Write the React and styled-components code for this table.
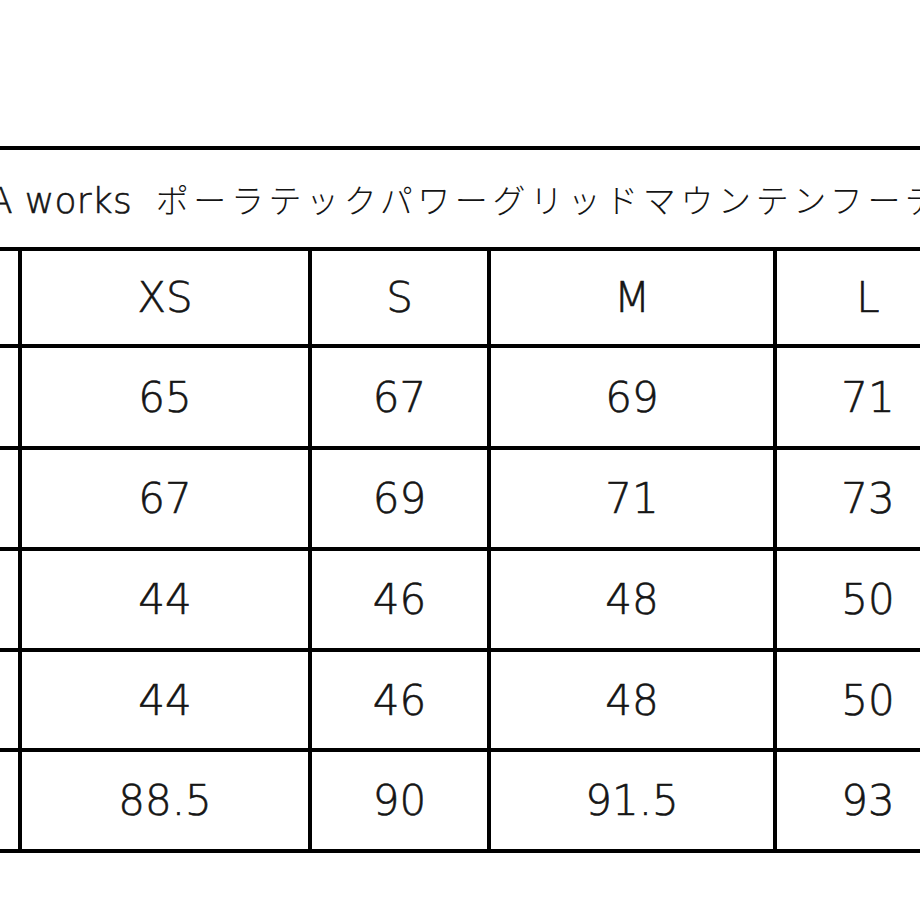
import styled, { createGlobalStyle } from "styled-components";

const GlobalStyle = createGlobalStyle`
  html, body {
    margin: 0;
    padding: 0;
    background: #fff;
  }
`;

const Viewport = styled.div`
  width: 920px;
  height: 920px;
  overflow: hidden;
  background: #fff;
  padding-top: 146px;
  box-sizing: border-box;
`;

const Chart = styled.table`
  margin-left: -182px;
  border-collapse: collapse;
  table-layout: fixed;
  width: 1341px;
  font-family: "DejaVu Sans", "Noto Sans CJK JP", sans-serif;
  font-weight: 300;
  color: #151515;
  -webkit-text-stroke: 0.6px #151515;

  td,
  th {
    border: 4px solid #000;
    padding: 0;
  }
`;

const TitleCell = styled.th`
  height: 97px;
  text-align: left;
  padding-left: 166px !important;
  font-weight: 300;
  white-space: pre;
  overflow: hidden;
`;

const Latin = styled.span`
  font-size: 36px;
  letter-spacing: 0.3px;
`;

const Kana = styled.span`
  font-family: "Noto Sans CJK JP", sans-serif;
  font-size: 33px;
  letter-spacing: 4.6px;
  -webkit-text-stroke: 0;
`;

const Row = styled.tr`
  height: ${(p) => p.$h}px;
`;

const Cell = styled.td`
  text-align: center;
  vertical-align: middle;
  font-size: 42px;
  letter-spacing: 0;
`;

const widths = [200, 290, 179, 286, 186, 200];
const sizes = ["XS", "S", "M", "L", "XL"];
const rows = [
  { h: 102, values: ["65", "67", "69", "71", "73"] },
  { h: 101, values: ["67", "69", "71", "73", "75"] },
  { h: 101, values: ["44", "46", "48", "50", "52"] },
  { h: 100, values: ["44", "46", "48", "50", "52"] },
  { h: 101, values: ["88.5", "90", "91.5", "93", "94.5"] },
];

const App = () => {
  return (
    <>
      <GlobalStyle />
      <Viewport>
        <Chart>
          <colgroup>
            {widths.map((w, i) => (
              <col key={i} style={{ width: w }} />
            ))}
          </colgroup>
          <tbody>
            <tr>
              <TitleCell colSpan={6}>
                <Latin>{"A works "}</Latin>
                <Kana>{" "}ポーラテックパワーグリッドマウンテンフーディ</Kana>
              </TitleCell>
            </tr>
            <Row $h={97}>
              <Cell />
              {sizes.map((s) => (
                <Cell key={s}>{s}</Cell>
              ))}
            </Row>
            {rows.map((r, i) => (
              <Row $h={r.h} key={i}>
                <Cell />
                {r.values.map((v, j) => (
                  <Cell key={j}>{v}</Cell>
                ))}
              </Row>
            ))}
          </tbody>
        </Chart>
      </Viewport>
    </>
  );
};

export default App;
